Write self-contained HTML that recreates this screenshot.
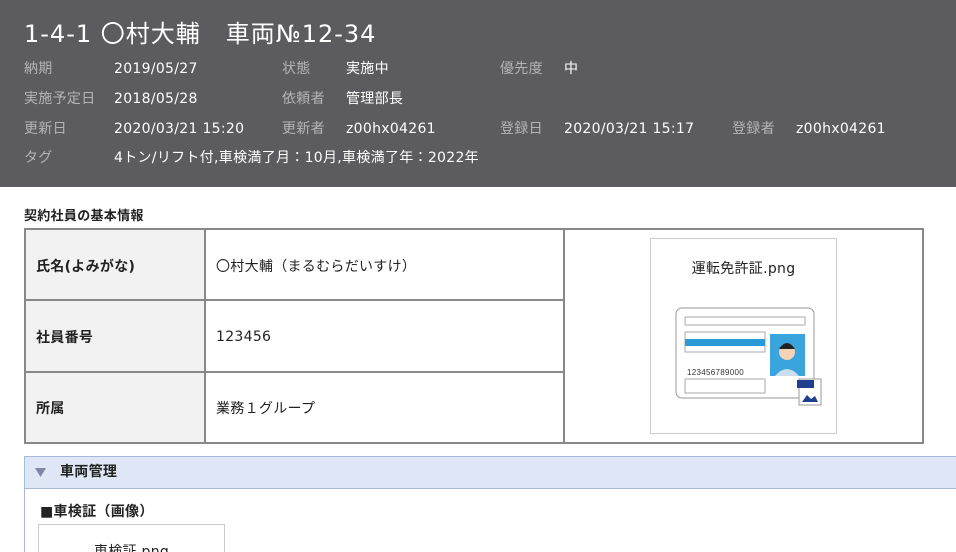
<!DOCTYPE html>
<html><head><meta charset="utf-8"><style>
*{margin:0;padding:0;box-sizing:border-box}
html,body{width:956px;height:552px;overflow:hidden}
body{background:#fff;font-family:"DejaVu Sans","Noto Sans CJK JP",sans-serif;color:#222;position:relative;letter-spacing:0.3px}
.hd{position:absolute;left:0;top:0;width:956px;height:187px;background:#5b5b60;color:#fff}
.hd .t{position:absolute;left:24px;top:17px;font-size:24px;line-height:34px;letter-spacing:1px}
.r{position:absolute;font-size:14px;line-height:20px;white-space:nowrap}
.l{color:#b4b4b8}
.st{position:absolute;left:24px;top:208px;font-size:13px;line-height:18px;font-weight:bold}
table{position:absolute;left:24px;top:228px;width:900px;height:216px;border-collapse:collapse;border:2px solid #888}
td{border:2px solid #888;font-size:14px;padding-left:10px;padding-top:2px}
td.lb{background:#f2f2f2;font-weight:bold;width:180px}
.img{position:absolute;left:650px;top:238px;width:187px;height:196px;border:1px solid #ccc;background:#fff}
.sec{position:absolute;left:24px;top:456px;width:940px;height:33px;background:#dfe6f5;border:1px solid #a9b8d8}
.panel{position:absolute;left:24px;top:488px;width:940px;height:70px;border-left:1px solid #a9b8d8}
</style></head><body>
<div class="hd">
<div class="t">1-4-1 〇村大輔　車両№12-34</div>
<div class="r l" style="left:24px;top:59px">納期</div><div class="r" style="left:114px;top:59px">2019/05/27</div>
<div class="r l" style="left:282px;top:59px">状態</div><div class="r" style="left:346px;top:59px">実施中</div>
<div class="r l" style="left:500px;top:59px">優先度</div><div class="r" style="left:564px;top:59px">中</div>
<div class="r l" style="left:24px;top:89px">実施予定日</div><div class="r" style="left:114px;top:89px">2018/05/28</div>
<div class="r l" style="left:282px;top:89px">依頼者</div><div class="r" style="left:346px;top:89px">管理部長</div>
<div class="r l" style="left:24px;top:119px">更新日</div><div class="r" style="left:114px;top:119px">2020/03/21 15:20</div>
<div class="r l" style="left:282px;top:119px">更新者</div><div class="r" style="left:346px;top:119px">z00hx04261</div>
<div class="r l" style="left:500px;top:119px">登録日</div><div class="r" style="left:564px;top:119px">2020/03/21 15:17</div>
<div class="r l" style="left:732px;top:119px">登録者</div><div class="r" style="left:796px;top:119px">z00hx04261</div>
<div class="r l" style="left:24px;top:148px">タグ</div><div class="r" style="left:114px;top:148px">4トン/リフト付,車検満了月：10月,車検満了年：2022年</div>
</div>
<div class="st">契約社員の基本情報</div>
<table>
<tr><td class="lb">氏名(よみがな)</td><td style="width:359px">〇村大輔（まるむらだいすけ）</td><td rowspan="3"></td></tr>
<tr><td class="lb">社員番号</td><td>123456</td></tr>
<tr><td class="lb">所属</td><td>業務１グループ</td></tr>
</table>
<div class="img">
<div style="position:absolute;top:19px;width:100%;text-align:center;font-size:14px">運転免許証.png</div>
<svg style="position:absolute;left:24px;top:68px" width="150" height="100" viewBox="0 0 150 100">
<rect x="1" y="1" width="138" height="90" rx="6" fill="#fff" stroke="#999"/>
<rect x="10" y="10" width="120" height="8" fill="none" stroke="#aaa"/>
<rect x="10" y="25" width="80" height="20" fill="none" stroke="#aaa"/>
<rect x="10" y="32" width="80" height="7" fill="#2a9ad6"/>
<rect x="95" y="27" width="35" height="42" fill="#3aa5dc"/>
<circle cx="112" cy="45" r="8" fill="#f3d2b5"/>
<path d="M104 42q8-12 16 0" fill="#222"/>
<path d="M100 69q12-14 24 0z" fill="#cde"/>
<text x="12" y="68" font-size="8" fill="#333" font-family="Liberation Sans">123456789000</text>
<rect x="10" y="72" width="80" height="14" fill="none" stroke="#aaa"/>
<rect x="124" y="72" width="22" height="26" fill="#fff" stroke="#999"/>
<rect x="122" y="73" width="17" height="8" fill="#1e3f8c"/>
<path d="M127 95l5-7 4 4 4-3 3 6z" fill="#1e3f8c"/>
</svg>
</div>
<div class="sec"><svg style="position:absolute;left:10px;top:11px" width="11" height="9"><path d="M0 0h11L5.5 9z" fill="#7e88a0"/></svg><span style="position:absolute;left:35px;top:5px;font-size:14px;line-height:20px;font-weight:bold">車両管理</span></div>
<div class="panel"></div>
<div style="position:absolute;left:40px;top:502px;font-size:14px;line-height:20px;font-weight:bold">■車検証（画像）</div>
<div style="position:absolute;left:38px;top:524px;width:187px;height:40px;border:1px solid #ccc"><div style="position:absolute;top:16px;width:100%;text-align:center;font-size:14px">車検証.png</div></div>
</body></html>
